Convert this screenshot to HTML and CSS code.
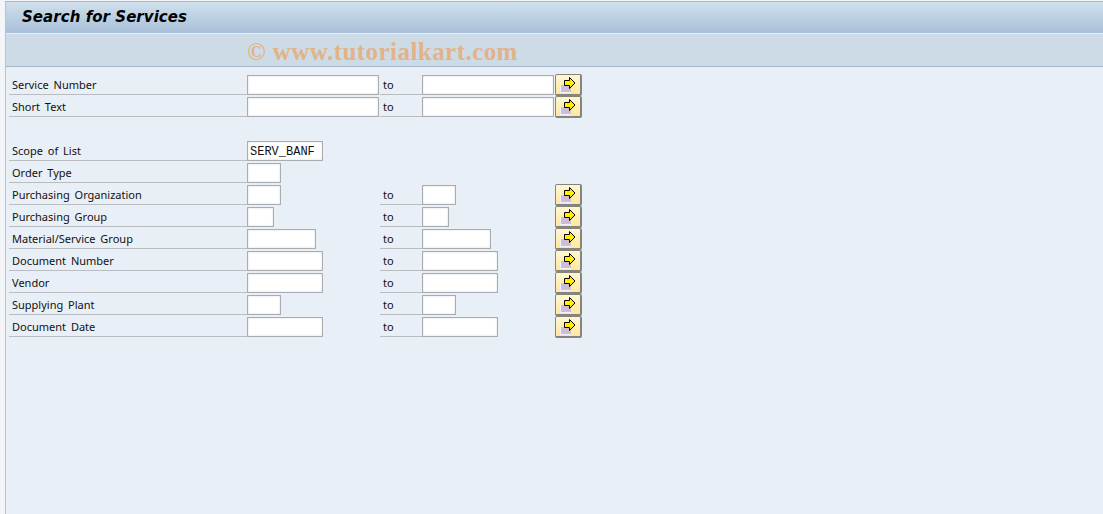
FILE: index.html
```html
<!DOCTYPE html>
<html lang="en">
<head>
<meta charset="utf-8">
<title>Search for Services</title>
<link rel="stylesheet" href="styles.css">
</head>
<body>
<svg class="defs" width="0" height="0" aria-hidden="true">
  <symbol id="arrow" viewBox="0 0 16 16">
    <rect x="0" y="8" width="11" height="8" fill="#f6f3f6"/>
    <rect x="1" y="8" width="10" height="7" fill="#cfbdd6"/>
    <path d="M4.5 3.5H9.5V0.5L15 6L9.5 11.5V8.5H4.5Z" fill="#ffec00" stroke="#000" stroke-width="1"/>
  </symbol>
</svg>
<main class="window">
  <header class="title-bar"><h1 class="title">Search for Services</h1></header>
  <div class="toolbar"><span class="watermark">© www.tutorialkart.com</span></div>
  <form class="form">
    <div class="row">
      <label class="label">Service Number</label>
      <div class="from"><input class="field w132"></div>
      <span class="to">to</span>
      <div class="until"><input class="field w132"></div>
      <button class="more" type="button"><svg class="icon"><use href="#arrow"/></svg></button>
    </div>
    <div class="row">
      <label class="label">Short Text</label>
      <div class="from"><input class="field w132"></div>
      <span class="to">to</span>
      <div class="until"><input class="field w132"></div>
      <button class="more" type="button"><svg class="icon"><use href="#arrow"/></svg></button>
    </div>
    <div class="row"></div>
    <div class="row">
      <label class="label">Scope of List</label>
      <div class="from"><input class="field w76 mono" value="SERV_BANF"></div>
    </div>
    <div class="row">
      <label class="label">Order Type</label>
      <div class="from"><input class="field w34"></div>
    </div>
    <div class="row">
      <label class="label">Purchasing Organization</label>
      <div class="from"><input class="field w34"></div>
      <span class="to">to</span>
      <div class="until"><input class="field w34"></div>
      <button class="more" type="button"><svg class="icon"><use href="#arrow"/></svg></button>
    </div>
    <div class="row">
      <label class="label">Purchasing Group</label>
      <div class="from"><input class="field w27"></div>
      <span class="to">to</span>
      <div class="until"><input class="field w27"></div>
      <button class="more" type="button"><svg class="icon"><use href="#arrow"/></svg></button>
    </div>
    <div class="row">
      <label class="label">Material/Service Group</label>
      <div class="from"><input class="field w69"></div>
      <span class="to">to</span>
      <div class="until"><input class="field w69"></div>
      <button class="more" type="button"><svg class="icon"><use href="#arrow"/></svg></button>
    </div>
    <div class="row">
      <label class="label">Document Number</label>
      <div class="from"><input class="field w76"></div>
      <span class="to">to</span>
      <div class="until"><input class="field w76"></div>
      <button class="more" type="button"><svg class="icon"><use href="#arrow"/></svg></button>
    </div>
    <div class="row">
      <label class="label">Vendor</label>
      <div class="from"><input class="field w76"></div>
      <span class="to">to</span>
      <div class="until"><input class="field w76"></div>
      <button class="more" type="button"><svg class="icon"><use href="#arrow"/></svg></button>
    </div>
    <div class="row">
      <label class="label">Supplying Plant</label>
      <div class="from"><input class="field w34"></div>
      <span class="to">to</span>
      <div class="until"><input class="field w34"></div>
      <button class="more" type="button"><svg class="icon"><use href="#arrow"/></svg></button>
    </div>
    <div class="row">
      <label class="label">Document Date</label>
      <div class="from"><input class="field w76"></div>
      <span class="to">to</span>
      <div class="until"><input class="field w76"></div>
      <button class="more" type="button"><svg class="icon"><use href="#arrow"/></svg></button>
    </div>
  </form>
</main>
</body>
</html>
```
FILE: styles.css
```css
html, body {
  margin: 0;
  height: 100%;
}
body {
  background: #f3f5f8;
  padding: 1px 0 0 5px;
  box-sizing: border-box;
  overflow: hidden;
  font-family: "Noto Sans", "Liberation Sans", sans-serif;
  font-size: 11px;
  word-spacing: 2px;
  color: #111;
}
.defs { position: absolute; }
.window {
  height: 513px;
  box-sizing: border-box;
  background: #e8eff6;
  border-left: 1px solid #b6c3d1;
  border-top: 1px solid #a9b8c8;
}
.title-bar {
  height: 32px;
  box-sizing: border-box;
  border-bottom: 1px solid #e8f0f6;
  background: linear-gradient(#d0e0ed, #a8c0d9);
  display: flex;
  align-items: center;
  padding: 0 0 2px 16px;
}
.title {
  margin: 0;
  font-family: "DejaVu Sans", sans-serif;
  font-size: 15px;
  font-weight: 700;
  font-style: italic;
  word-spacing: 0;
  color: #000;
  letter-spacing: 0.05px;
}
.toolbar {
  height: 33px;
  box-sizing: border-box;
  background: #cddbe7;
  border-bottom: 1px solid #a5b5c8;
  display: flex;
  align-items: center;
  padding: 3px 0 0 241px;
}
.watermark {
  font-family: "Liberation Serif", serif;
  font-size: 25px;
  font-weight: 700;
  word-spacing: 0;
  color: #e2b388;
  letter-spacing: 0.45px;
}
.form {
  padding: 8px 0 0 3px;
}
.row {
  display: flex;
  height: 22px;
}
.label {
  width: 238px;
  height: 20px;
  box-sizing: border-box;
  padding: 2px 0 0 3px;
  line-height: 16px;
  border-bottom: 1px solid #b9bdc2;
}
.from { width: 133px; }
.until { width: 133px; }
.to {
  width: 42px;
  height: 20px;
  box-sizing: border-box;
  padding: 2px 0 0 3px;
  line-height: 16px;
  border-bottom: 1px solid #b9bdc2;
}
.field {
  display: block;
  height: 20px;
  box-sizing: border-box;
  margin: 0;
  padding: 0 2px;
  background: #fff;
  border: 1px solid #a9acb0;
  border-radius: 0;
  outline: 0;
  box-shadow: inset 0 0 2px #d4d4d4;
}
.w27 { width: 27px; }
.w34 { width: 34px; }
.w69 { width: 69px; }
.w76 { width: 76px; }
.w132 { width: 132px; }
.mono {
  font-family: "Liberation Mono", monospace;
  font-size: 12px;
  padding-top: 1px;
  color: #111;
}
.more {
  width: 27px;
  height: 22px;
  margin: -1px 0 0 0;
  padding: 0;
  box-sizing: border-box;
  border: 1px solid #85857d;
  border-width: 1px 2px 2px 1px;
  border-radius: 2px;
  background: linear-gradient(#fff7d4, #fee79c);
  display: flex;
  align-items: center;
  justify-content: center;
}
.icon {
  width: 16px;
  height: 16px;
  display: block;
}
```
